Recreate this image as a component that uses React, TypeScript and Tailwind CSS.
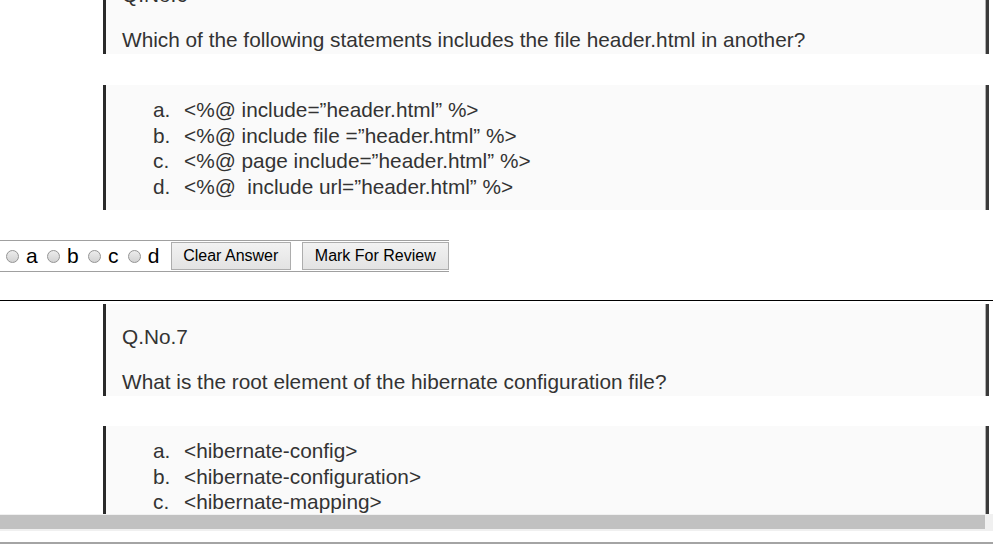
import React from "react";

const font = { fontFamily: '"Liberation Sans", Arial, sans-serif' };

function QuestionImage({ no, text }: { no: string; text: string }) {
  return (
    <div className="ml-[103px] w-[886px] h-[92px] flex bg-[#fafafa] shrink-0">
      <div className="w-[3px] h-full bg-[#2a2a2a]" />
      <div className="flex-1 pl-[16px] pt-[20px] text-[20.8px] leading-[26px] text-[#333]">
        <div>{no}</div>
        <div className="mt-[18.7px] whitespace-nowrap">{text}</div>
      </div>
      <div className="w-[1px] h-full bg-[#b0b0b0]" />
      <div className="w-[3px] h-full bg-[#3a3a3a]" />
    </div>
  );
}

function OptionsImage({ options }: { options: [string, string][] }) {
  return (
    <div className="ml-[103px] w-[886px] h-[125px] flex bg-[#fafafa] shrink-0">
      <div className="w-[3px] h-full bg-[#2a2a2a]" />
      <div className="flex-1 pl-[47px] pt-[12px] text-[20.8px] leading-[25.6px] text-[#333]">
        {options.map(([m, t]) => (
          <div key={m} className="flex whitespace-pre">
            <span className="w-[31px]">{m}</span>
            <span>{t}</span>
          </div>
        ))}
      </div>
      <div className="w-[1px] h-full bg-[#b0b0b0]" />
      <div className="w-[3px] h-full bg-[#3a3a3a]" />
    </div>
  );
}

function Radio() {
  return (
    <div className="w-[13px] h-[13px] rounded-full border border-[#949494] bg-gradient-to-b from-[#ececec] to-[#d2d2d2] shrink-0" />
  );
}

export default function App() {
  return (
    <div className="w-[993px] h-[549px] overflow-hidden bg-white" style={font}>
      <div className="h-[514px] overflow-hidden">
        <div className="flex flex-col mt-[-38px]">
          <QuestionImage
            no="Q.No.6"
            text="Which of the following statements includes the file header.html in another?"
          />
          <div className="h-[31px] shrink-0" />
          <OptionsImage
            options={[
              ["a.", "<%@ include=\u201dheader.html\u201d %>"],
              ["b.", "<%@ include file =\u201dheader.html\u201d %>"],
              ["c.", "<%@ page include=\u201dheader.html\u201d %>"],
              ["d.", "<%@  include url=\u201dheader.html\u201d %>"],
            ]}
          />
          <div className="h-[30px] shrink-0" />
          <div className="w-[449px] h-[32px] border-y border-[#a0a0a0] flex items-center pl-[6px] text-[21px] text-black shrink-0">
            {["a", "b", "c", "d"].map((l) => (
              <div key={l} className="flex items-center mr-[9.3px]">
                <Radio />
                <span className="ml-[7px] leading-[28px]">{l}</span>
              </div>
            ))}
            <button className="ml-[2px] w-[120px] h-[28px] border border-[#adadad] bg-gradient-to-b from-[#f2f2f2] to-[#e3e3e3] text-[16px] text-black leading-none">
              Clear Answer
            </button>
            <button className="ml-[11px] w-[147px] h-[28px] border border-[#adadad] bg-gradient-to-b from-[#f2f2f2] to-[#e3e3e3] text-[16px] text-black leading-none">
              Mark For Review
            </button>
          </div>
          <div className="h-[28px] shrink-0" />
          <div className="w-full h-[1px] bg-black shrink-0" />
          <div className="h-[3px] shrink-0" />
          <QuestionImage
            no="Q.No.7"
            text="What is the root element of the hibernate configuration file?"
          />
          <div className="h-[30px] shrink-0" />
          <OptionsImage
            options={[
              ["a.", "<hibernate-config>"],
              ["b.", "<hibernate-configuration>"],
              ["c.", "<hibernate-mapping>"],
            ]}
          />
        </div>
      </div>
      <div className="h-[17px] bg-[#f0f0f0] pt-[1px]">
        <div className="w-[985px] h-[14px] bg-[#c1c1c1]" />
      </div>
      <div className="h-[11px]" />
      <div className="h-[2px] bg-[#a4a4a4]" />
    </div>
  );
}
